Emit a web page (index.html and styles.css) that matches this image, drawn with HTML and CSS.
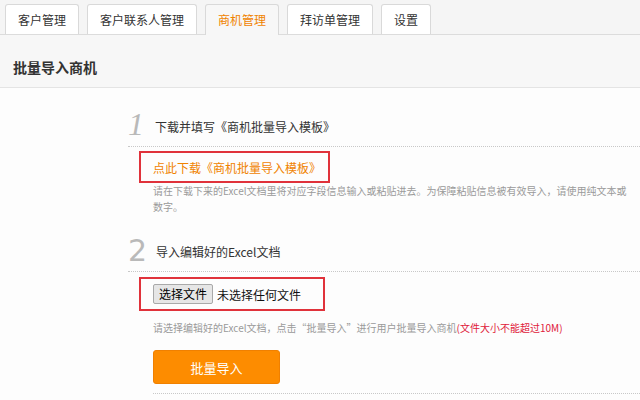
FILE: index.html
```html
<!DOCTYPE html>
<html lang="zh-CN">

<head>
    <meta charset="UTF-8">
    <title>批量导入商机</title>
    <link rel="stylesheet" href="styles.css">
</head>

<body>
    <ul class="tabs">
        <li class="tab">客户管理</li>
        <li class="tab">客户联系人管理</li>
        <li class="tab active">商机管理</li>
        <li class="tab">拜访单管理</li>
        <li class="tab">设置</li>
    </ul>

    <div class="page_head">
        <h2>批量导入商机</h2>
    </div>

    <div class="content">
        <div class="step">
            <div class="step_head">
                <span class="num num_one">1</span>
                <span class="step_title">下载并填写《商机批量导入模板》</span>
            </div>
            <div class="step_body">
                <div class="mark">
                    <a class="download" href="#">点此下载《商机批量导入模板》</a>
                </div>
                <p class="hint">请在下载下来的Excel文档里将对应字段信息输入或粘贴进去。为保障粘贴信息被有效导入，请使用纯文本或数字。</p>
            </div>
        </div>

        <div class="step">
            <div class="step_head">
                <span class="num num_two">2</span>
                <span class="step_title">导入编辑好的Excel文档</span>
            </div>
            <div class="step_body">
                <div class="mark mark_file">
                    <button type="button" class="file_btn">选择文件</button>
                    <span class="file_name">未选择任何文件</span>
                </div>
                <p class="hint hint_file">请选择编辑好的Excel文档，点击“批量导入”进行用户批量导入商机<span class="warn">(文件大小不能超过10M)</span></p>
                <button type="button" class="import_btn">批量导入</button>
                <div class="step_end"></div>
            </div>
        </div>
    </div>
</body>

</html>
```

FILE: styles.css
```css
body {
    margin: 0;
    background-color: #fdfdfd;
    font-family: "Liberation Sans", "Noto Sans CJK SC", sans-serif;
    font-size: 12px;
    color: #333;
}

/* tab bar */
.tabs {
    display: flex;
    align-items: flex-end;
    gap: 8px;
    margin: 0;
    padding: 4px 0 0 5px;
    list-style: none;
    background-color: #f5f5f5;
    border-bottom: 1px solid #dcdcdc;
}

.tab {
    height: 29px;
    line-height: 29px;
    padding: 0 12px;
    background-color: #fff;
    border: 1px solid #d9d9d9;
    border-bottom: none;
    border-radius: 3px 3px 0 0;
    font-family: "Noto Sans CJK SC", sans-serif;
    color: #333;
}

.tab.active {
    color: #f08300;
    background-color: #f7f7f7;
    margin-bottom: -1px;
    height: 30px;
}

.page_head {
    height: 52px;
    background-color: #f7f7f7;
    border-bottom: 1px solid #e4e4e4;
}

.page_head h2 {
    margin: 0;
    padding: 23px 0 0 13px;
    font-family: "Noto Sans CJK SC", sans-serif;
    font-size: 14px;
    line-height: 18px;
    font-weight: bold;
    color: #333;
}

.content {
    padding: 2px 0 0 128px;
}

.step_head {
    display: flex;
    align-items: center;
    height: 32px;
    padding: 18px 0 6px 0;
    border-bottom: 1px dotted #c8c8c8;
}

.num {
    color: #b9b9b9;
    line-height: 32px;
}

.num_one {
    font-family: "Liberation Serif", serif;
    font-style: italic;
    font-size: 32px;
    margin-right: 11px;
}

.num_two {
    font-family: "DejaVu Sans", sans-serif;
    font-size: 30px;
    margin-top: 4px;
    margin-right: 9px;
}

.step_title {
    font-family: "Noto Sans CJK SC", sans-serif;
    padding-top: 4px;
    color: #333;
}

.step_body {
    padding-left: 11px;
}

/* red outline around the action */
.mark {
    display: inline-flex;
    align-items: center;
    height: 28px;
    margin-top: 4px;
    padding: 0 7px 0 12px;
    border: 2px solid #e0323b;
}

.download {
    font-family: "Noto Sans CJK SC", sans-serif;
    color: #f08300;
    text-decoration: none;
}

.hint {
    margin: 0;
    padding: 0 6px 0 14px;
    font-family: "Noto Sans CJK SC", sans-serif;
    font-size: 10px;
    line-height: 16px;
    color: #9a9a9a;
}

.mark_file {
    height: 30px;
    margin-top: 5px;
    padding: 0 22px 0 12px;
    gap: 4px;
}

.file_btn {
    height: 20px;
    padding: 0 5px;
    background-color: #e6e6e6;
    border: 1px solid #a9a9a9;
    border-radius: 2px;
    font-family: "Noto Sans CJK SC", sans-serif;
    font-size: 12px;
    line-height: 18px;
    color: #000;
}

.file_name {
    font-family: "Noto Sans CJK SC", sans-serif;
    font-size: 12px;
    color: #111;
}

.hint_file {
    margin-top: 9px;
}

.warn {
    color: #e0203a;
}

.import_btn {
    display: block;
    width: 127px;
    height: 34px;
    margin: 14px 0 0 14px;
    background-color: #fd8c00;
    border: 1px solid #f08000;
    border-radius: 3px;
    font-family: "Noto Sans CJK SC", sans-serif;
    font-size: 13px;
    color: #fff;
}

.step_end {
    margin: 9px 0 0 14px;
    border-bottom: 1px dotted #c8c8c8;
}
```
